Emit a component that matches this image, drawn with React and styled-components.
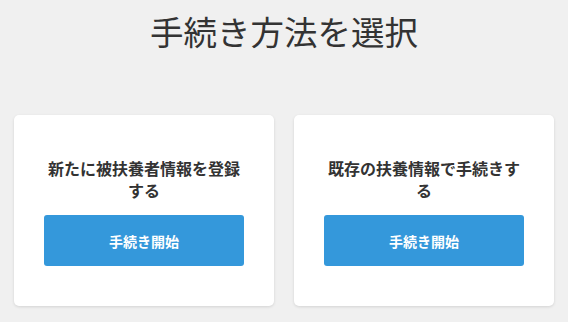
import React from "react";
import styled, { createGlobalStyle } from "styled-components";

const GlobalStyle = createGlobalStyle`
  html, body {
    margin: 0;
    padding: 0;
    background: #f0f0f0;
    font-family: "Noto Sans CJK JP", "Noto Sans", sans-serif;
    color: #333;
  }
`;

const Page = styled.div`
  width: 568px;
  height: 322px;
  overflow: hidden;
  box-sizing: border-box;
  padding: 9px 14px 0;
`;

const Title = styled.h1`
  margin: 0;
  text-align: center;
  font-size: 33.5px;
  font-weight: 400;
  line-height: 44px;
  color: #333;
`;

const Cards = styled.div`
  display: grid;
  grid-template-columns: 260px 260px;
  gap: 20px;
  margin-top: 62px;
`;

const Card = styled.div`
  background: #fff;
  border-radius: 5px;
  box-shadow: 0 1px 3px rgba(0, 0, 0, 0.12);
  padding: 42px 30px 40px;
  display: flex;
  flex-direction: column;
  align-items: center;
  height: 191px;
  box-sizing: border-box;
`;

const CardTitle = styled.h2`
  margin: 0 0 14px;
  font-size: 16px;
  font-weight: 700;
  line-height: 22px;
  text-align: center;
  color: #333;
  width: 200px;
`;

const Button = styled.button`
  width: 200px;
  height: 51px;
  border: none;
  border-radius: 3px;
  background: #3498db;
  color: #fff;
  font-family: inherit;
  font-size: 14px;
  font-weight: 700;
  cursor: pointer;
`;

const options = ["新たに被扶養者情報を登録する", "既存の扶養情報で手続きする"];

export default function App() {
  return (
    <>
      <GlobalStyle />
      <Page>
        <Title>手続き方法を選択</Title>
        <Cards>
          {options.map((o) => (
            <Card key={o}>
              <CardTitle>{o}</CardTitle>
              <Button>手続き開始</Button>
            </Card>
          ))}
        </Cards>
      </Page>
    </>
  );
}
